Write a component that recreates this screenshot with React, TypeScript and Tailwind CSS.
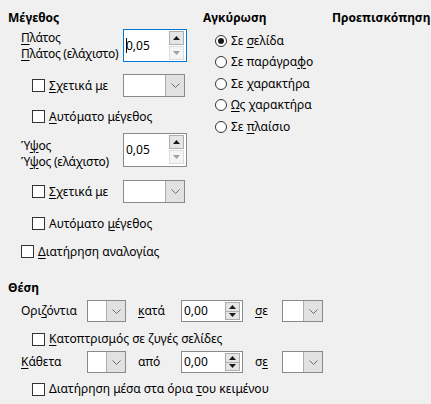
import type { ReactNode } from 'react';

const U = ({ children }: { children: ReactNode }) => (
    <span className="underline decoration-1 underline-offset-[2px]">{children}</span>
);

const Check = () => <span className="box-border inline-block h-[13px] w-[13px] shrink-0 border border-[#333333] bg-white" />;

const Radio = ({ checked }: { checked?: boolean }) => (
    <span className="box-border flex h-[12px] w-[12px] shrink-0 items-center justify-center rounded-full border border-[#333333] bg-white">
        {checked && <span className="h-[6px] w-[6px] rounded-full bg-[#1a1a1a]" />}
    </span>
);

const Arrow = ({ up, color }: { up?: boolean; color: string }) => (
    <svg width="7" height="4" viewBox="0 0 7 4">
        <path d={up ? 'M0 4 L3.5 0 L7 4 Z' : 'M0 0 L3.5 4 L7 0 Z'} fill={color} />
    </svg>
);

type SpinProps = Readonly<{
    value: string;
    tall?: boolean;
    focused?: boolean;
    className: string;
}>;

const SpinBox = ({ value, tall, focused, className }: SpinProps) => (
    <div
        className={`box-border flex shrink-0 items-stretch bg-white ${className} ${
            focused ? 'border border-[#0078d7]' : 'border border-[#8a8a8a]'
        }`}
    >
        <div className="flex flex-1 items-center pl-[2px]">
            {focused && <span className="mr-[-1px] h-[15px] w-[1px] bg-black" />}
            <span>{value}</span>
        </div>
        {tall ? (
            <div className="flex w-[17px] flex-col gap-[1px] py-[1px] pr-[2px]">
                <div className="box-border flex h-[14px] items-center justify-center border border-[#adadad] bg-[#e5e5e5]">
                    <Arrow up color="#1a1a1a" />
                </div>
                <div className="box-border flex h-[14px] items-center justify-center border border-[#dcdcdc] bg-[#f4f4f4]">
                    <Arrow color="#a0a0a0" />
                </div>
            </div>
        ) : (
            <div className="flex w-[17px] flex-col py-[1px] pr-[2px]">
                <div className="box-border flex flex-1 flex-col border border-[#adadad] bg-[#e5e5e5]">
                    <div className="flex flex-1 items-center justify-center">
                        <Arrow up color="#1a1a1a" />
                    </div>
                    <div className="h-[1px] bg-[#adadad]" />
                    <div className="flex flex-1 items-center justify-center">
                        <Arrow color="#1a1a1a" />
                    </div>
                </div>
            </div>
        )}
    </div>
);

const Drop = ({ className }: { className: string }) => (
    <div className={`box-border flex shrink-0 border border-[#8a8a8a] bg-white ${className}`}>
        <div className="flex-1" />
        <div className="box-border flex w-[19px] items-center justify-center border-l border-[#adadad] bg-[#e1e1e1]">
            <svg width="9" height="5" viewBox="0 0 9 5">
                <path d="M0.5 0.5 L4.5 4.5 L8.5 0.5" fill="none" stroke="#6d6d6d" strokeWidth="1" />
            </svg>
        </div>
    </div>
);

const CheckRow = ({ children, className }: { children: ReactNode; className: string }) => (
    <div className={`flex items-center gap-[4px] ${className}`}>
        <Check />
        <span className="whitespace-nowrap">{children}</span>
    </div>
);

export default function App() {
    return (
        <div className="relative h-[404px] w-[431px] overflow-hidden bg-[#f0f0f0] font-['Noto_Sans',sans-serif] text-[12px] leading-[16px] text-black">
            <div className="flex pl-[8px] pt-[10px]">
                {/* Μέγεθος */}
                <div className="flex w-[195px] flex-col">
                    <div className="h-[15px] font-bold leading-[15px]">Μέγεθος</div>

                    <div className="mt-[4px] flex h-[33px] pl-[13px]">
                        <div className="w-[102px] whitespace-nowrap pt-[1px] tracking-[-0.25px]">
                            <div>
                                <U>Π</U>λάτος
                            </div>
                            <div>
                                <U>Π</U>λάτος (ελάχιστο)
                            </div>
                        </div>
                        <SpinBox value="0,05" tall focused className="h-[33px] w-[64px]" />
                    </div>

                    <div className="mt-[12px] flex h-[23px] items-center pl-[24px]">
                        <CheckRow className="w-[91px]">
                            <U>Σ</U>χετικά με
                        </CheckRow>
                        <Drop className="h-[23px] w-[62px]" />
                    </div>

                    <CheckRow className="mt-[8px] h-[23px] pl-[24px]">
                        <U>Α</U>υτόματο μέγεθος
                    </CheckRow>

                    <div className="mt-[5px] flex h-[34px] pl-[13px]">
                        <div className="w-[102px] whitespace-nowrap pt-[5px] tracking-[-0.25px]">
                            <div>
                                Ύ<U>ψ</U>ος
                            </div>
                            <div>
                                Ύ<U>ψ</U>ος (ελάχιστο)
                            </div>
                        </div>
                        <SpinBox value="0,05" tall className="h-[34px] w-[64px]" />
                    </div>

                    <div className="mt-[13px] flex h-[23px] items-center pl-[24px]">
                        <CheckRow className="w-[91px]">
                            <U>Σ</U>χετικά με
                        </CheckRow>
                        <Drop className="h-[23px] w-[62px]" />
                    </div>

                    <CheckRow className="mt-[9px] h-[23px] pl-[24px]">
                        Αυτόματο <U>μ</U>έγεθος
                    </CheckRow>

                    <CheckRow className="mt-[5px] h-[23px] pl-[13px]">
                        <U>Δ</U>ιατήρηση αναλογίας
                    </CheckRow>
                </div>

                {/* Αγκύρωση */}
                <div className="flex w-[129px] flex-col">
                    <div className="h-[15px] font-bold leading-[15px]">Αγκύρωση</div>
                    <div className="mt-[5px] flex flex-col pl-[12px]">
                        {[
                            { checked: true, label: <>Σε <U>σ</U>ελίδα</> },
                            { checked: false, label: <>Σε παράγρα<U>φ</U>ο</> },
                            { checked: false, label: <>Σε <U>χ</U>αρακτήρα</> },
                            { checked: false, label: <><U>Ω</U>ς χαρακτήρα</> },
                            { checked: false, label: <>Σε <U>π</U>λαίσιο</> },
                        ].map((r, i) => (
                            <div key={i} className="flex h-[21.5px] items-center gap-[4px]">
                                <Radio checked={r.checked} />
                                <span className="whitespace-nowrap">{r.label}</span>
                            </div>
                        ))}
                    </div>
                </div>

                <div className="h-[15px] font-bold leading-[15px]">Προεπισκόπηση</div>
            </div>

            {/* Θέση */}
            <div className="flex flex-col pl-[8px]">
                <div className="mt-[17px] h-[15px] font-bold leading-[15px]">Θέση</div>

                <div className="mt-[5px] flex h-[22px] items-center pl-[13px]">
                    <span className="w-[66px]">
                        Ορι<U>ζ</U>όντια
                    </span>
                    <Drop className="h-[22px] w-[39px]" />
                    <span className="ml-[12px] w-[43px]">
                        <U>κ</U>ατά
                    </span>
                    <SpinBox value="0,00" className="h-[22px] w-[62px]" />
                    <span className="ml-[12px] w-[27px]">
                        <U>σ</U>ε
                    </span>
                    <Drop className="h-[22px] w-[41px]" />
                </div>

                <CheckRow className="mt-[6px] h-[22px] pl-[24px]">
                    <U>Κ</U>ατοπτρισμός σε ζυγές σελίδες
                </CheckRow>

                <div className="mt-[1px] flex h-[22px] items-center pl-[13px]">
                    <span className="w-[66px]">
                        <U>Κ</U>άθετα
                    </span>
                    <Drop className="h-[22px] w-[39px]" />
                    <span className="ml-[12px] w-[43px]">από</span>
                    <SpinBox value="0,00" className="h-[22px] w-[62px]" />
                    <span className="ml-[12px] w-[27px]">
                        σ<U>ε</U>
                    </span>
                    <Drop className="h-[22px] w-[41px]" />
                </div>

                <CheckRow className="mt-[5px] h-[22px] pl-[24px]">
                    Διατήρηση μέσα στα όρια <U>τ</U>ου κειμένου
                </CheckRow>
            </div>
        </div>
    );
}
